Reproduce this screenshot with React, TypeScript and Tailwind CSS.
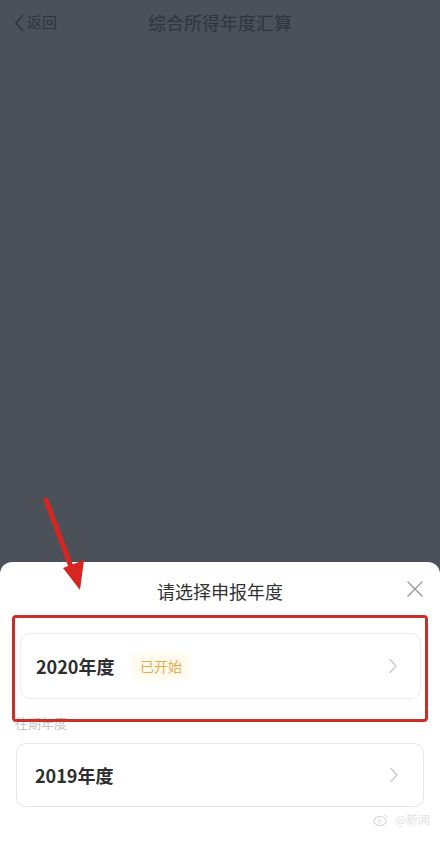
import React from "react";

const cjk = { fontFamily: '"Noto Sans CJK SC", "Noto Sans", sans-serif' };

function Chevron() {
  return (
    <svg width="10" height="16" viewBox="0 0 10 16" fill="none">
      <path d="M2 1.5 L8 8 L2 14.5" stroke="#c9c9c9" strokeWidth="1.4" strokeLinecap="round" strokeLinejoin="round" />
    </svg>
  );
}

export default function App() {
  return (
    <div className="relative w-[440px] h-[844px] flex flex-col bg-[#4b5059] overflow-hidden" style={cjk}>
      {/* header, dimmed by overlay */}
      <div className="h-[45px] flex items-center relative">
        <div className="flex items-center pl-[14px] gap-[3px]">
          <svg width="10" height="18" viewBox="0 0 10 18" fill="none">
            <path d="M8.5 1.5 L2 9 L8.5 16.5" stroke="#30343d" strokeWidth="1.6" strokeLinecap="round" strokeLinejoin="round" />
          </svg>
          <span className="text-[15px] text-[#30343d]">返回</span>
        </div>
        <div className="absolute left-0 right-0 top-0 h-[45px] flex items-center justify-center pointer-events-none">
          <span className="text-[18px] text-[#30343d]">综合所得年度汇算</span>
        </div>
      </div>

      <div className="flex-1" />

      {/* bottom sheet */}
      <div className="h-[282px] bg-white rounded-t-[12px] flex flex-col">
        <div className="h-[53px] relative flex items-center justify-center pt-[6px]">
          <span className="text-[18px] text-[#333]">请选择申报年度</span>
          <svg className="absolute right-[16px] top-[18px]" width="18" height="18" viewBox="0 0 18 18" fill="none">
            <path d="M2 2 L16 16 M16 2 L2 16" stroke="#9a9a9a" strokeWidth="1.4" strokeLinecap="round" />
          </svg>
        </div>

        <div className="relative z-10 mx-[12px] border-[3px] border-[#cc2f2a] rounded-[4px] pt-[15px] pb-[20px] pl-[5px] pr-[4px]">
          <div className="h-[66px] rounded-[10px] border border-[#ececec] flex items-center pl-[15px] pr-[22px]">
            <span className="text-[18px] font-bold text-[#2e2e2e] w-[98px]">2020年度</span>
            <span className="text-[14px] text-[#e4ac4c] bg-[#fffaee] px-[6px] py-[1px] rounded-[3px] shadow-[0_0_6px_#fff6e0]">已开始</span>
            <div className="flex-1" />
            <Chevron />
          </div>
        </div>

        <div className="-mt-[8px] pl-[15px] text-[13px] leading-[18px] text-[#c4c4c4]">往期年度</div>

        <div className="mt-[11px] mx-[16px] h-[64px] rounded-[10px] border border-[#e6e6e6] flex items-center pl-[18px] pr-[24px]">
          <span className="text-[18px] font-bold text-[#2e2e2e]">2019年度</span>
          <div className="flex-1" />
          <Chevron />
        </div>

        <div className="flex justify-end items-center gap-[6px] pr-[10px] mt-[4px]">
          <svg width="16" height="14" viewBox="0 0 16 14" fill="none">
            <ellipse cx="7" cy="8" rx="6" ry="4.5" stroke="#d8d8d8" strokeWidth="1.2" />
            <circle cx="6.5" cy="8.5" r="1.6" stroke="#d8d8d8" strokeWidth="1" />
            <path d="M11 2 Q14 2.5 14.5 5.5" stroke="#e3e3e3" strokeWidth="1" />
          </svg>
          <span className="text-[12px] text-[#e2e2e2]">@新闻</span>
        </div>
      </div>

      {/* red annotation arrow */}
      <svg className="absolute left-[38px] top-[496px] pointer-events-none" width="52" height="98" viewBox="0 0 52 98" fill="none">
        <path d="M8 4 L35 76" stroke="#d9251f" strokeWidth="5" strokeLinecap="round" />
        <path d="M25 72 L42 94 L46 64 Z" fill="#d9251f" />
      </svg>
    </div>
  );
}
